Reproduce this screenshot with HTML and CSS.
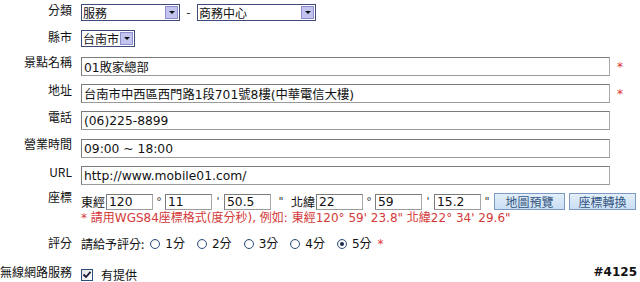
FILE: index.html
```html
<!DOCTYPE html>
<html lang="zh-Hant">
<head>
<meta charset="UTF-8" />
<title>景點資料</title>
<link rel="stylesheet" href="styles.css">
</head>
<body>
  <div class="form">
    <div class="row">
      <div class="lbl pad3">分類</div>
      <div class="fld fld-sel">
        <div class="select w99"><span class="sel-text">服務</span><span class="sel-btn"></span></div>
        <span class="dash">-</span>
        <div class="select w119"><span class="sel-text">商務中心</span><span class="sel-btn"></span></div>
      </div>
    </div>

    <div class="row">
      <div class="lbl pad3">縣市</div>
      <div class="fld">
        <div class="select w54"><span class="sel-text">台南市</span><span class="sel-btn"></span></div>
      </div>
    </div>

    <div class="row">
      <div class="lbl pad1">景點名稱</div>
      <div class="fld"><input class="text" type="text" value="01敗家總部" /><span class="req">*</span></div>
    </div>

    <div class="row">
      <div class="lbl">地址</div>
      <div class="fld"><input class="text" type="text" value="台南市中西區西門路1段701號8樓(中華電信大樓)" /><span class="req">*</span></div>
    </div>

    <div class="row tall">
      <div class="lbl">電話</div>
      <div class="fld"><input class="text" type="text" value="(06)225-8899" /></div>
    </div>

    <div class="row">
      <div class="lbl pad1">營業時間</div>
      <div class="fld"><input class="text" type="text" value="09:00 ~ 18:00" /></div>
    </div>

    <div class="row">
      <div class="lbl">URL</div>
      <div class="fld"><input class="text" type="text" value="http://www.mobile01.com/" /></div>
    </div>

    <div class="row coords">
      <div class="lbl pad0">座標</div>
      <div class="fld">
        <div class="coord-line">
          <span class="dir">東經</span>
          <input class="num" type="text" value="120" /><span class="sym">°</span>
          <input class="num" type="text" value="11" /><span class="sym">'</span>
          <input class="num" type="text" value="50.5" /><span class="sym sym-wide">"</span>
          <span class="dir">北緯</span>
          <input class="num" type="text" value="22" /><span class="sym">°</span>
          <input class="num" type="text" value="59" /><span class="sym">'</span>
          <input class="num" type="text" value="15.2" /><span class="sym">"</span>
          <button class="btn b1">地圖預覽</button>
          <button class="btn b2">座標轉換</button>
        </div>
        <div class="hint">* 請用WGS84座標格式(度分秒), 例如: 東經120° 59' 23.8" 北緯22° 34' 29.6"</div>
      </div>
    </div>

    <div class="row rating">
      <div class="lbl pad4">評分</div>
      <div class="fld">
        <span class="ask">請給予評分:</span>
        <label class="opt"><span class="radio"></span>1分</label>
        <label class="opt"><span class="radio"></span>2分</label>
        <label class="opt"><span class="radio"></span>3分</label>
        <label class="opt"><span class="radio"></span>4分</label>
        <label class="opt last"><span class="radio on"></span>5分</label>
        <span class="req inline">*</span>
      </div>
    </div>

    <div class="row wifi">
      <div class="lbl pad3">無線網路服務</div>
      <div class="fld">
        <label class="chk-line">
          <span class="check"><svg width="10" height="10" viewBox="0 0 10 10"><path d="M1.5 4.5 L4 7 L8.5 1.8" fill="none" stroke="#1a1a3a" stroke-width="1.8"/></svg></span>
          有提供
        </label>
      </div>
    </div>
  </div>

  <div class="mark">#4125</div>
</body>
</html>
```

FILE: styles.css
```css
body { margin: 0; background: #fff; font-family: "DejaVu Sans", "Noto Sans CJK TC", sans-serif; font-size: 12px; color: #111; }
.form { width: 640px; }

.row { display: flex; align-items: flex-start; height: 27px; }
.row.tall { height: 28px; }
.row.coords { height: 42px; }
.row.rating { height: 30px; }
.row.wifi { height: 20px; }

.lbl { width: 72px; flex: none; text-align: right; line-height: 14px; padding-top: 2px; font-family: "Noto Sans CJK TC", sans-serif; font-size: 12px; color: #111; white-space: nowrap; }
.lbl.pad0 { padding-top: 0; }
.lbl.pad1 { padding-top: 1px; }
.lbl.pad3 { padding-top: 3px; }
.lbl.pad4 { padding-top: 4px; }
.fld { margin-left: 9px; padding-top: 3px; display: flex; align-items: center; }
.fld-sel { padding-top: 4px; }
.coords .fld { display: block; }
.rating .fld { padding-top: 5px; }
.wifi .fld { padding-top: 6px; }

/* XP style dropdowns */
.select { display: flex; align-items: center; height: 17px; box-sizing: border-box; border: 1px solid #3f4a7a; background: #fff; }
.w99 { width: 99px; }
.w119 { width: 119px; }
.w54 { width: 54px; }
.sel-text { flex: 1; padding-left: 1px; font-family: "Noto Sans CJK TC", sans-serif; font-size: 12px; line-height: 15px; white-space: nowrap; }
.sel-btn { position: relative; flex: none; width: 13px; height: 13px; margin: 0 1px 0 1px; box-sizing: border-box; border: 1px solid #8e8ecc; background: #c3c3ef; }
.sel-btn::after { content: ""; position: absolute; left: 3px; top: 4px; border-left: 3px solid transparent; border-right: 3px solid transparent; border-top: 3px solid #111; }
.dash { width: 17px; text-align: center; line-height: 14px; color: #333; }

.text { width: 529px; height: 19px; box-sizing: border-box; margin: 0; padding: 0 2px; border: 1px solid #7b7b7b; border-bottom-color: #9a9a9a; border-right-color: #a8a8a8; font-family: "DejaVu Sans", "Noto Sans CJK TC", sans-serif; font-size: 12.3px; color: #111; background: #fff; }
.req { color: #d33; font-size: 12px; margin-left: 7px; line-height: 14px; }
.req.inline { margin-left: 6px; }

.coord-line { display: flex; align-items: center; height: 17px; }
.dir { width: 24px; margin-right: 1px; font-family: "Noto Sans CJK TC", sans-serif; font-size: 12px; line-height: 14px; }
.num { width: 47px; height: 16px; box-sizing: border-box; margin: 0; padding: 0 2px; border: 1px solid #7b7b7b; border-bottom-color: #9a9a9a; border-right-color: #a8a8a8; font-family: "DejaVu Sans", sans-serif; font-size: 12.3px; color: #111; background: #fff; }
.sym { width: 12px; text-align: center; color: #333; font-size: 11px; }
.sym-wide { width: 20px; }
.btn { height: 17px; margin: 0 0 0 1px; padding: 0; border: 1px solid #7d9ac4; background: linear-gradient(#e3effa, #c9def3); color: #33557f; font-family: "Noto Sans CJK TC", sans-serif; font-size: 12px; line-height: 14px; }
.b1 { width: 71px; }
.b2 { width: 67px; margin-left: 4px; }
.hint { margin-top: 1px; color: #d33a3a; font-family: "DejaVu Sans", "Noto Sans CJK TC", sans-serif; font-size: 12px; line-height: 14px; white-space: nowrap; }

.ask { font-family: "Noto Sans CJK TC", sans-serif; line-height: 14px; margin-right: 6px; }
.opt { display: flex; align-items: center; margin-right: 12px; font-family: "DejaVu Sans", "Noto Sans CJK TC", sans-serif; line-height: 14px; }
.opt.last { margin-right: 0; }
.radio { position: relative; width: 8px; height: 8px; margin-right: 5px; border: 1px solid #2b4e7e; border-radius: 50%; background: radial-gradient(circle at 65% 65%, #fff 40%, #dcdcd6 100%); }
.radio.on::after { content: ""; position: absolute; left: 2px; top: 2px; width: 4px; height: 4px; border-radius: 50%; background: #1c2a4a; }

.chk-line { display: flex; align-items: center; font-family: "Noto Sans CJK TC", sans-serif; line-height: 14px; }
.check { display: flex; align-items: center; justify-content: center; width: 10px; height: 10px; margin-right: 8px; border: 1px solid #2b4e7e; background: linear-gradient(135deg, #e4e4de, #fff); }

.mark { position: absolute; right: 3px; bottom: 3px; font-family: "DejaVu Sans", sans-serif; font-weight: bold; font-size: 12px; color: #111; text-shadow: 1px 0 #fff, -1px 0 #fff, 0 1px #fff, 0 -1px #fff; }
```
